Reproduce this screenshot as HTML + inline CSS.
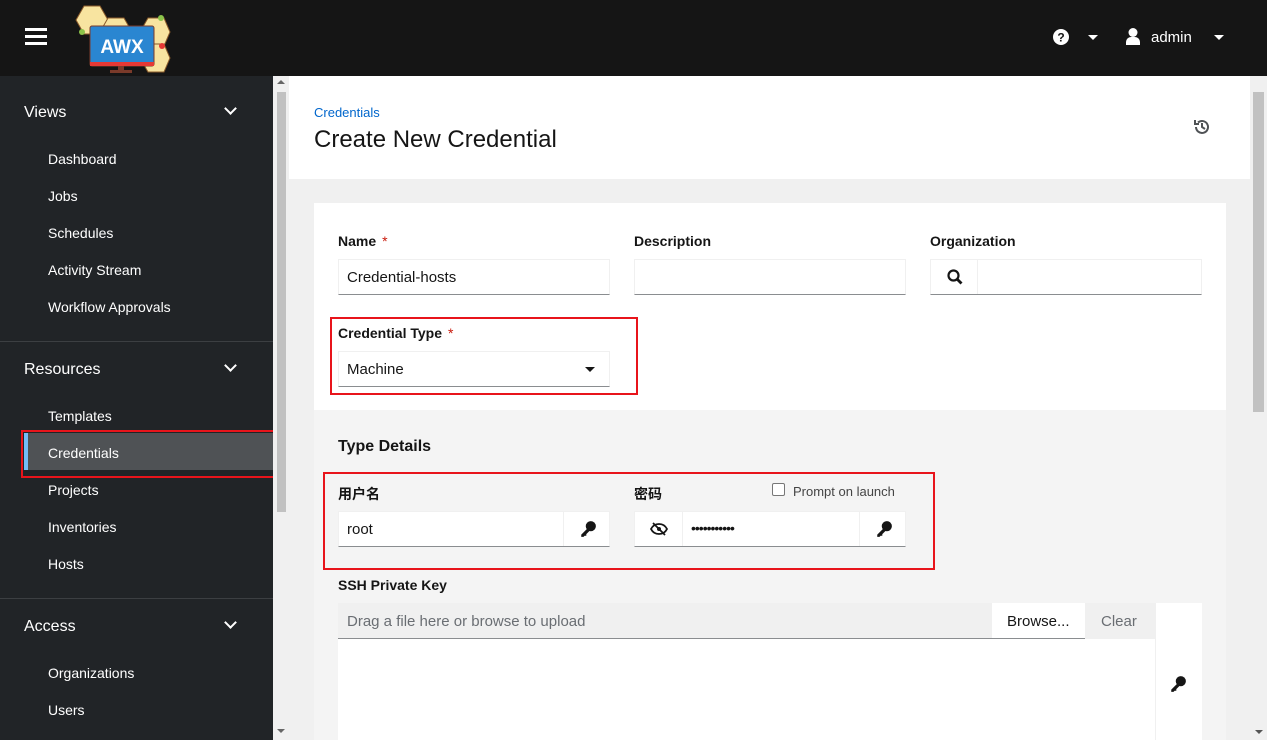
<!DOCTYPE html>
<html><head><meta charset="utf-8"><style>
*{box-sizing:border-box;margin:0;padding:0}
body{width:1267px;height:740px;overflow:hidden;font-family:"Liberation Sans","Noto Sans CJK SC",sans-serif;background:#f0f0f0;position:relative;color:#151515}
.abs{position:absolute}
.hdr{left:0;top:0;width:1267px;height:76px;background:#151515}
.side{left:0;top:76px;width:273px;height:664px;background:#212427;color:#fff}
.sb{left:273px;top:76px;width:16px;height:664px;background:#f0f0f0}
.sec{position:absolute;left:24px;font-size:16px;color:#fff}
.chev{position:absolute;left:226px;width:9px;height:9px;border-right:2.5px solid #fff;border-bottom:2.5px solid #fff;transform:rotate(45deg)}
.it{position:absolute;left:48px;font-size:14px;color:#fff}
.sep{position:absolute;left:0;width:273px;height:1px;background:#3c3f42}
.lbl{position:absolute;font-size:14px;font-weight:bold}
.req{color:#c9190b;font-weight:normal;margin-left:6px}
.inp{position:absolute;background:#fff;border:1px solid #f0f0f0;border-bottom:1px solid #8a8d90;height:36px;font-size:15px;padding:9px 8px;color:#151515}
.red{position:absolute;border:2px solid #e8141b}
</style></head><body>
<div class="abs hdr"></div>
<div class="abs" style="left:25px;top:28px;width:22px;height:3px;background:#fff;box-shadow:0 7px 0 #fff,0 14px 0 #fff"></div>
<svg class="abs" style="left:70px;top:2px" width="104" height="74" viewBox="0 0 104 74">
<g fill="#f8e4a0" stroke="#8a5a2a" stroke-width="1"><polygon points="6,18 14,4 30,4 38,18 30,32 14,32"/><polygon points="30,30 38,16 54,16 62,30 54,44 38,44"/><polygon points="70,30 78,16 94,16 100,30 94,44 78,44"/><polygon points="70,56 78,42 94,42 100,56 94,70 78,70"/></g>
<circle cx="91" cy="16" r="3" fill="#8bc34a"/><circle cx="12" cy="30" r="3" fill="#8bc34a"/><circle cx="92" cy="44" r="3" fill="#e53935"/>
<rect x="20" y="24" width="64" height="40" rx="2" fill="#2a86d1" stroke="#7a3a2a"/>
<rect x="20" y="60" width="64" height="4" fill="#e53935"/>
<rect x="48" y="64" width="6" height="4" fill="#7a3a2a"/><rect x="40" y="68" width="22" height="3" fill="#7a3a2a"/>
<text x="52" y="51" text-anchor="middle" font-family="Liberation Sans" font-weight="bold" font-size="19" fill="#fff">AWX</text></svg>
<svg class="abs" style="left:1053px;top:29px" width="16" height="16" viewBox="0 0 16 16"><circle cx="8" cy="8" r="8" fill="#fff"/><text x="8" y="12.5" text-anchor="middle" font-size="12" font-weight="bold" fill="#151515" font-family="Liberation Sans">?</text></svg>
<div class="abs" style="left:1088px;top:35px;border:5px solid transparent;border-top:5px solid #fff"></div>
<svg class="abs" style="left:1126px;top:28px" width="14" height="17" viewBox="0 0 14 17"><circle cx="7" cy="4.5" r="4.5" fill="#fff"/><path d="M0 17v-3a5 5 0 0 1 5-5h4a5 5 0 0 1 5 5v3z" fill="#fff"/></svg>
<div class="abs" style="left:1151px;top:29px;color:#fff;font-size:15px">admin</div>
<div class="abs" style="left:1214px;top:35px;border:5px solid transparent;border-top:5px solid #fff"></div>

<div class="abs side">
<div class="sec" style="top:28px">Views</div><div class="chev" style="top:28px"></div>
<div class="it" style="top:75px">Dashboard</div><div class="it" style="top:112px">Jobs</div><div class="it" style="top:149px">Schedules</div><div class="it" style="top:186px">Activity Stream</div><div class="it" style="top:223px">Workflow Approvals</div>
<div class="sep" style="top:265px"></div>
<div class="sec" style="top:285px">Resources</div><div class="chev" style="top:285px"></div>
<div class="it" style="top:332px">Templates</div>
<div style="position:absolute;left:24px;top:357px;width:249px;height:37px;background:#4f5255;border-left:4px solid #73bcf7"></div>
<div class="it" style="top:369px">Credentials</div>
<div class="it" style="top:406px">Projects</div><div class="it" style="top:443px">Inventories</div><div class="it" style="top:480px">Hosts</div>
<div class="sep" style="top:522px"></div>
<div class="sec" style="top:542px">Access</div><div class="chev" style="top:542px"></div>
<div class="it" style="top:589px">Organizations</div><div class="it" style="top:626px">Users</div>
</div>
<div class="red" style="left:21px;top:430px;width:254px;height:48px"></div>
<div class="abs sb"><div style="position:absolute;left:4px;top:16px;width:9px;height:420px;background:#c1c1c1"></div></div>
<div class="abs" style="left:277px;top:80px;border:4px solid transparent;border-bottom:4px solid #666;border-top:0"></div>
<div class="abs" style="left:277px;top:729px;border:4px solid transparent;border-top:4px solid #666;border-bottom:0"></div>

<div class="abs" style="left:289px;top:76px;width:961px;height:103px;background:#fff"></div>
<div class="abs" style="left:314px;top:105px;font-size:13px;color:#0066cc">Credentials</div>
<div class="abs" style="left:314px;top:126px;font-size:24px">Create New Credential</div>
<svg class="abs" style="left:1193px;top:118px" width="18" height="18" viewBox="0 0 18 18" fill="none" stroke="#4f5255" stroke-width="2"><path d="M3 9a6 6 0 1 0 2-4.5"/><path d="M2 2v4h4" /><path d="M9 5v4l3 2"/></svg>
<div class="abs" style="left:1250px;top:76px;width:17px;height:664px;background:#f0f0f0"><div style="position:absolute;left:3px;top:16px;width:11px;height:320px;background:#c1c1c1"></div></div>

<div class="abs" style="left:314px;top:203px;width:912px;height:537px;background:#fff"></div>
<div class="abs" style="left:314px;top:410px;width:912px;height:330px;background:#f4f4f4"></div>
<div class="lbl" style="left:338px;top:233px">Name<span class="req">*</span></div>
<div class="inp" style="left:338px;top:259px;width:272px">Credential-hosts</div>
<div class="lbl" style="left:634px;top:233px">Description</div>
<div class="inp" style="left:634px;top:259px;width:272px"></div>
<div class="lbl" style="left:930px;top:233px">Organization</div>
<div class="inp" style="left:930px;top:259px;width:272px;padding:0"><div style="position:absolute;left:0;top:0;width:47px;height:34px;border-right:1px solid #f0f0f0"></div>
<svg style="position:absolute;left:16px;top:9px" width="16" height="16" viewBox="0 0 16 16"><circle cx="6.5" cy="6.5" r="5" fill="none" stroke="#151515" stroke-width="2.2"/><path d="M10 10l4.5 4.5" stroke="#151515" stroke-width="2.8"/></svg></div>
<div class="lbl" style="left:338px;top:325px">Credential Type<span class="req">*</span></div>
<div class="inp" style="left:338px;top:351px;width:272px">Machine<div style="position:absolute;left:246px;top:15px;border:5px solid transparent;border-top:5px solid #151515"></div></div>
<div class="red" style="left:330px;top:317px;width:308px;height:78px"></div>

<div class="abs" style="left:338px;top:438px;font-size:16px;font-weight:bold">Type Details</div>
<div class="lbl" style="left:338px;top:484px">用户名</div>
<div class="inp" style="left:338px;top:511px;width:272px">root<div style="position:absolute;left:224px;top:0;width:47px;height:34px;border-left:1px solid #f0f0f0"></div>
<svg style="position:absolute;left:240px;top:8px" width="18" height="18" viewBox="0 0 16 16"><circle cx="10.5" cy="5.5" r="4.5" fill="#151515"/><path d="M8 7l-6 6v2h2l1-1h1.5v-1.5l4-4z" fill="#151515"/></svg></div>
<div class="lbl" style="left:634px;top:484px">密码</div>
<div class="abs" style="left:772px;top:483px;width:13px;height:13px;border:1px solid #777;border-radius:2px;background:#fff"></div>
<div class="abs" style="left:793px;top:484px;font-size:13px;color:#444">Prompt on launch</div>
<div class="inp" style="left:634px;top:511px;width:272px;padding:0">
<svg style="position:absolute;left:15px;top:10px" width="18" height="14" viewBox="0 0 18 14"><path d="M1 7c2-4 5-5 8-5s6 1 8 5c-2 4-5 5-8 5S3 11 1 7z" fill="none" stroke="#151515" stroke-width="1.8"/><circle cx="9" cy="7" r="2" fill="#151515"/><path d="M3 1l12 12" stroke="#151515" stroke-width="1.8"/></svg>
<div style="position:absolute;left:47px;top:0;width:1px;height:34px;background:#f0f0f0"></div>
<div style="position:absolute;left:56px;top:8px;font-size:14px;letter-spacing:-1px">•••••••••••</div>
<div style="position:absolute;left:224px;top:0;width:1px;height:34px;background:#f0f0f0"></div>
<svg style="position:absolute;left:240px;top:8px" width="18" height="18" viewBox="0 0 16 16"><circle cx="10.5" cy="5.5" r="4.5" fill="#151515"/><path d="M8 7l-6 6v2h2l1-1h1.5v-1.5l4-4z" fill="#151515"/></svg></div>
<div class="red" style="left:323px;top:472px;width:612px;height:98px"></div>

<div class="lbl" style="left:338px;top:577px">SSH Private Key</div>
<div class="abs" style="left:338px;top:603px;width:654px;height:36px;background:#f0f0f0;border-bottom:1px solid #8a8d90;font-size:15px;color:#6a6e73;padding:10px 9px">Drag a file here or browse to upload</div>
<div class="abs" style="left:992px;top:603px;width:93px;height:36px;background:#fff;border-bottom:1px solid #8a8d90;font-size:15px;padding:10px 15px">Browse...</div>
<div class="abs" style="left:1085px;top:603px;width:70px;height:36px;background:#f0f0f0;font-size:15px;color:#6a6e73;padding:10px 16px">Clear</div>
<div class="abs" style="left:338px;top:639px;width:817px;height:101px;background:#fff"></div>
<div class="abs" style="left:1155px;top:603px;width:47px;height:137px;background:#fff;border-left:1px solid #f0f0f0"></div>
<svg class="abs" style="left:1169px;top:675px" width="18" height="18" viewBox="0 0 16 16"><circle cx="10.5" cy="5.5" r="4.5" fill="#151515"/><path d="M8 7l-6 6v2h2l1-1h1.5v-1.5l4-4z" fill="#151515"/></svg>
<div class="abs" style="left:1255px;top:730px;border:4px solid transparent;border-top:4px solid #555;border-bottom:0"></div>
</body></html>
